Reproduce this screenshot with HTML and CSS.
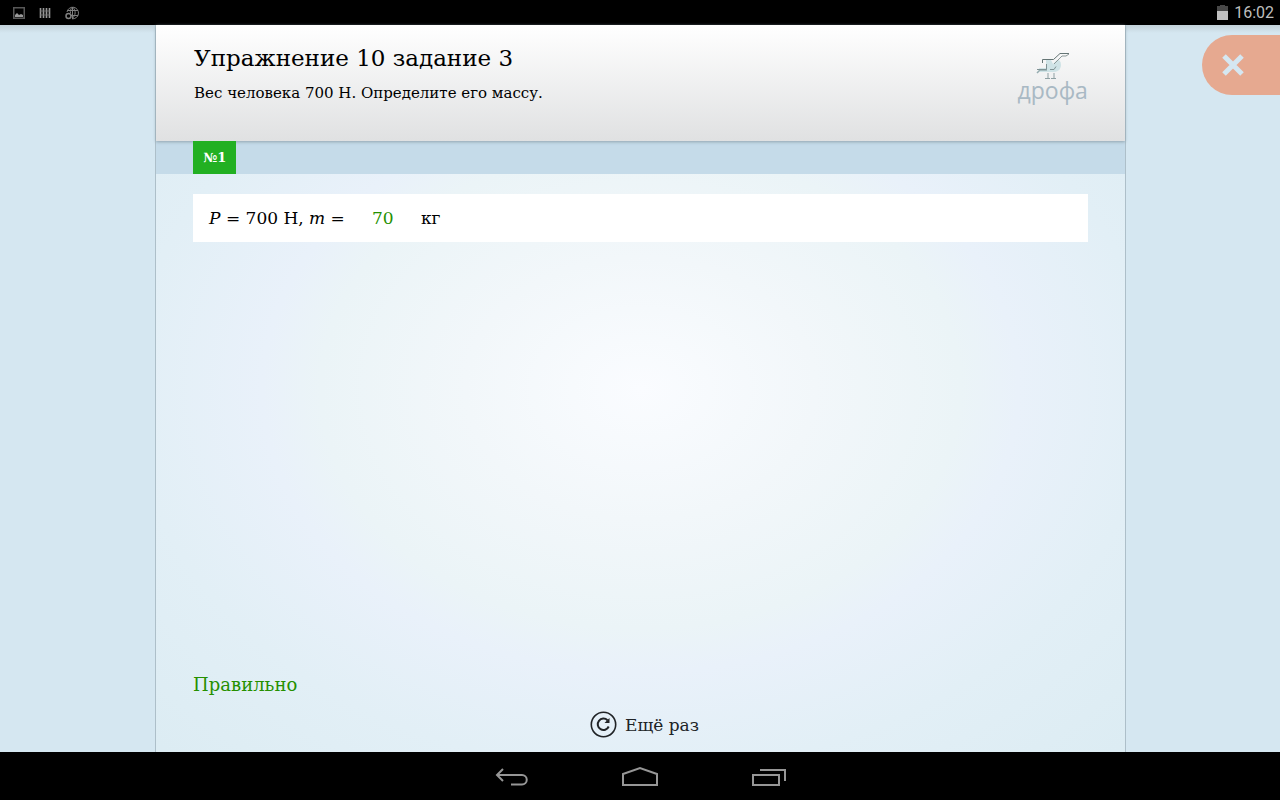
FILE: index.html
```html
<!DOCTYPE html>
<html lang="ru">

<head>
    <meta charset="UTF-8">
    <meta name="viewport" content="width=device-width, initial-scale=1.0">
    <title>Упражнение 10 задание 3</title>
    <link rel="stylesheet" href="styles.css">
</head>

<body>
    <div class="status-bar">
        <div class="notifications">
            <svg width="12" height="12" viewBox="0 0 12 12">
                <rect x="0.75" y="0.75" width="10.5" height="10.5" fill="none" stroke="#585858" stroke-width="1.5"/>
                <path d="M2 10V8l2-2 2 2 2-1 2 1v2z" fill="#999"/>
            </svg>
            <svg width="12" height="12" viewBox="0 0 12 12">
                <path d="M1.5 1v10M4.5 1v10M7.5 1v10M10.5 1v10" stroke="#999" stroke-width="1.6"/>
                <path d="M1 4h10M1 8h10" stroke="#777" stroke-width="0.8"/>
            </svg>
            <svg width="14" height="14" viewBox="0 0 14 14" fill="none" stroke="#808080">
                <path d="M2 6a5.8 5.8 0 1 1 5 6.8M7.5 1v12M3 4.5h10M6 9.5h7M7.5 1c-2 2-2.5 4-2 6M7.5 1c4 4 3 8 0 11.5"/>
                <circle cx="3.5" cy="10" r="2.5" stroke-width="1.5"/>
            </svg>
        </div>
        <div class="clock">
            <svg width="11" height="16" viewBox="0 0 11 16">
                <path d="M3 0h5v1h3v5H0V1h3z" fill="#484848"/>
                <path d="M0 6h11v9H0z" fill="#c0c0c0"/>
            </svg>
            <span>16:02</span>
        </div>
    </div>

    <div class="screen">
        <main class="exercise">
            <header class="task-header">
                <div class="task-text">
                    <h1>Упражнение 10 задание 3</h1>
                    <p>Вес человека 700 Н. Определите его массу.</p>
                </div>
                <div class="logo">
                    <svg width="34" height="28" viewBox="0 0 34 28" fill="none">
                        <path d="M4 20h14c5 0 7-4 7-7s-1-5-4-5l-4 4-2-4h-5v8H3z" fill="#cfe3e6"/>
                        <path d="M1 21l3-3h7" stroke="#96adb0" stroke-width="1.5"/>
                        <path d="M6.500 11V7.500h11L24 1.500h9" stroke="#657575"/>
                        <path d="M33 2l-3 2h-4l-8 8" stroke="#8c9999"/>
                        <path d="M1 17.500h9.500V12M14 17.500h4l2-3" stroke="#7f9294"/>
                        <path d="M12 21v5M18 21v5M9 26.500h5M15 26.500h5" stroke="#8fa0a3"/>
                    </svg>
                    <span>дрофа</span>
                </div>
            </header>
            <nav class="tabs">
                <a href="#task-1" class="tab">№1</a>
            </nav>
            <form class="task" id="task-1">
                <div class="answer-row">
                    <label for="mass"><i>P</i> = 700 Н, <i>m</i> =</label>
                    <input class="answer" id="mass" type="text" value="70">
                    <span>кг</span>
                </div>
                <div class="result">Правильно</div>
                <button class="retry" type="reset">
                    <svg width="27" height="27" viewBox="0 0 27 27" fill="none" stroke="#202326">
                        <circle cx="13.5" cy="13.5" r="12.2" stroke-width="1.6"/>
                        <path d="M18.7 15.5a5.7 5.7 0 1 1-1.2-6.2" stroke-width="2"/>
                        <path d="M19.5 7v5h-5z" fill="#202326" stroke="none"/>
                    </svg>
                    Ещё раз
                </button>
            </form>
        </main>
        <button class="close" aria-label="Закрыть">
            <svg width="22" height="22" viewBox="0 0 22 22">
                <path d="M2 2l18 18M20 2L2 20" stroke="#d5e7f1" stroke-width="5"/>
            </svg>
        </button>
    </div>

    <div class="nav-bar">
        <button aria-label="Назад">
            <svg width="36" height="20" viewBox="0 0 36 20" fill="none" stroke="#969696" stroke-width="2">
                <path d="M9 3L3 9l6 6M3 9h25a4.5 4.5 0 0 1 0 9.500H17"/>
            </svg>
        </button>
        <button aria-label="Домой">
            <svg width="36" height="20" viewBox="0 0 36 20" fill="none" stroke="#969696" stroke-width="2">
                <path d="M1 19V8l17-6 17 6v11z"/>
            </svg>
        </button>
        <button aria-label="Недавние">
            <svg width="36" height="20" viewBox="0 0 36 20" fill="none" stroke="#969696" stroke-width="2">
                <path d="M3 9h26v10H3zM10 4h25v11"/>
            </svg>
        </button>
    </div>
</body>

</html>
```
FILE: styles.css
```css
* {
    box-sizing: border-box;
}

body {
    margin: 0;
    min-height: 100vh;
    display: flex;
    flex-direction: column;
    background-color: #d5e7f1;
    color: #000;
    font-family: "DejaVu Serif", serif;
}

svg {
    display: block;
}

button {
    border: 0;
    padding: 0;
    background: none;
    font-family: inherit;
}

.status-bar {
    display: flex;
    align-items: center;
    justify-content: space-between;
    height: 25px;
    padding: 0 6px 0 13px;
    background-color: #000;
}

.notifications {
    display: flex;
    align-items: center;
    gap: 14px;
}

.clock {
    display: flex;
    align-items: center;
    gap: 6px;
    color: #bebebe;
    font-family: Roboto, sans-serif;
    font-size: 16px;
}

.screen {
    position: relative;
    display: flex;
    flex: 1;
    justify-content: center;
    background: linear-gradient(#c2d1d9, #d5e7f1 8px);
}

.exercise {
    display: flex;
    flex-direction: column;
    width: calc(76% - 2px);
    margin-left: 1px;
    border: 1px solid #adbfc9;
    border-width: 0 1px;
    background: radial-gradient(closest-side, #fafcff, #f2f7fa 36%, #ebf4f7 66%, #e9f1fa 78%, #e2eff6 105%, #dcecf3 140%);
}

.task-header {
    position: relative;
    display: flex;
    justify-content: space-between;
    min-height: 116px;
    padding: 16px 37px 0 38px;
    background: linear-gradient(#fff, #e0e1e2);
    box-shadow: 0 1px 3px #91a4af;
}

.task-text h1 {
    margin: 0;
    font-size: 23px;
    font-weight: normal;
    line-height: 34px;
}

.task-text p {
    margin: 8px 0 0;
    font-size: 15px;
    line-height: 20px;
}

.logo {
    display: flex;
    flex-direction: column;
    align-items: center;
    padding-top: 11px;
    color: #a9b9c4;
    font-family: "Open Sans", sans-serif;
    font-size: 23px;
    line-height: 20px;
}

.tabs {
    display: flex;
    padding: 0 37px;
    background-color: #c5dbe9;
}

.tab {
    position: relative;
    padding: 0 10px;
    background-color: #22b022;
    color: #fff;
    font-size: 13px;
    font-weight: bold;
    line-height: 33px;
    text-decoration: none;
}

.task {
    display: flex;
    flex: 1;
    flex-direction: column;
    padding: 20px 37px 14px;
}

.answer-row {
    display: flex;
    align-items: center;
    min-height: 48px;
    padding: 0 16px;
    background-color: #fff;
    font-size: 17px;
}

.answer {
    width: 76px;
    padding: 0;
    border: 0;
    background: none;
    color: #259000;
    font-family: inherit;
    font-size: 17px;
    text-align: center;
}

.result {
    margin-top: auto;
    color: #259000;
    font-size: 18px;
    line-height: 24px;
}

.retry {
    display: flex;
    align-items: center;
    align-self: center;
    gap: 8px;
    margin: 14px 0 0 8px;
    color: #202326;
    font-size: 17px;
}

.close {
    position: absolute;
    top: 10px;
    right: 0;
    width: 78px;
    height: 60px;
    padding-left: 20px;
    border-radius: 30px 0 0 30px;
    background-color: #e6a990;
}

.nav-bar {
    display: flex;
    align-items: center;
    justify-content: center;
    gap: 92px;
    height: 48px;
    background-color: #000;
}
```
